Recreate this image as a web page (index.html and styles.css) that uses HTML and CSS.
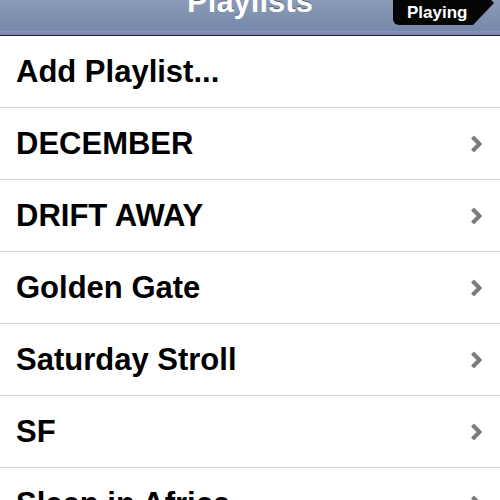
FILE: index.html
```html
<!DOCTYPE HTML>
<html>

<head>
    <link rel="stylesheet" href="styles.css">
    <title>Playlists</title>
</head>

<body>
    <div class="navbar">
        <div></div>
        <h1 class="title">Playlists</h1>
        <div class="now-playing">Now<br>Playing</div>
    </div>
    <ul class="list">
        <li class="row">Add Playlist...</li>
        <li class="row">DECEMBER
            <svg class="chevron" width="13" height="20" viewBox="0 0 13 20"><polyline points="2.5,3 9.5,10 2.5,17" /></svg>
        </li>
        <li class="row">DRIFT AWAY
            <svg class="chevron" width="13" height="20" viewBox="0 0 13 20"><polyline points="2.5,3 9.5,10 2.5,17" /></svg>
        </li>
        <li class="row">Golden Gate
            <svg class="chevron" width="13" height="20" viewBox="0 0 13 20"><polyline points="2.5,3 9.5,10 2.5,17" /></svg>
        </li>
        <li class="row">Saturday Stroll
            <svg class="chevron" width="13" height="20" viewBox="0 0 13 20"><polyline points="2.5,3 9.5,10 2.5,17" /></svg>
        </li>
        <li class="row">SF
            <svg class="chevron" width="13" height="20" viewBox="0 0 13 20"><polyline points="2.5,3 9.5,10 2.5,17" /></svg>
        </li>
        <li class="row">Sleep in Africa
            <svg class="chevron" width="13" height="20" viewBox="0 0 13 20"><polyline points="2.5,3 9.5,10 2.5,17" /></svg>
        </li>
    </ul>
</body>

</html>
```

FILE: styles.css
```css
body {
    margin: 0;
    background-color: white;
    font-family: "Liberation Sans", Arial, sans-serif;
    overflow: hidden;
}
.navbar {
    display: grid;
    grid-template-columns: 1fr auto 1fr;
    grid-template-rows: 35px;
    align-items: end;
    height: 35px;
    background: linear-gradient(#8b9bb7, #7688aa 88%, #8a8fbe 90%, #7b82ad);
    border-bottom: 1px solid #262626;
}
.title {
    margin: 0 0 18px 0;
    font-size: 31px;
    line-height: 30px;
    font-weight: bold;
    color: white;
    text-shadow: 0 -1px 0 rgba(40, 50, 70, 0.6);
}
.now-playing {
    justify-self: end;
    width: 101px;
    height: 44px;
    margin: 0 6px 10px 0;
    padding: 3px 27px 0 14px;
    border-radius: 6px 0 0 6px;
    background-color: #050505;
    clip-path: polygon(0 0, 80px 0, 101px 22px, 80px 44px, 0 44px);
    color: white;
    font-size: 17px;
    line-height: 19px;
    font-weight: bold;
    text-align: center;
    box-sizing: border-box;
}
.list {
    list-style: none;
    margin: 0;
    padding: 0;
}
.row {
    display: flex;
    justify-content: space-between;
    align-items: center;
    height: 71px;
    padding: 0 17px 0 16px;
    border-bottom: 1px solid #d2d2d2;
    font-size: 31px;
    font-weight: bold;
    color: black;
}
.chevron polyline {
    fill: none;
    stroke: #7a7a7a;
    stroke-width: 4;
}
```
